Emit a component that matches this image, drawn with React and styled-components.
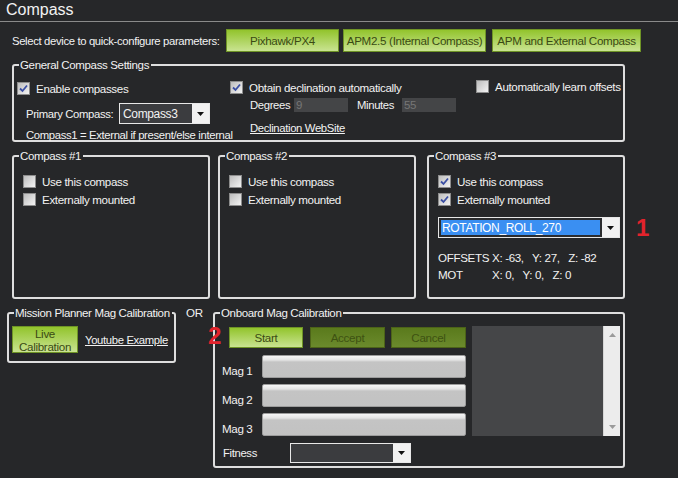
import React from "react";
import styled, { createGlobalStyle } from "styled-components";

const GlobalStyle = createGlobalStyle`
  html, body {
    margin: 0;
    padding: 0;
    background: #262729;
  }
`;

const Page = styled.div`
  width: 678px;
  height: 478px;
  overflow: hidden;
  background: #262729;
  color: #f2f2f2;
  font-family: "Liberation Sans", Arial, sans-serif;
  font-size: 11.3px;
  letter-spacing: -0.35px;
  white-space: nowrap;
`;

const Header = styled.div`
  height: 21px;
  line-height: 20px;
  padding-left: 6px;
  font-size: 16px;
  letter-spacing: 0;
  border-bottom: 1px solid #8a8a8a;
`;

const Body = styled.div`
  padding-left: 12px;
  display: flex;
  flex-direction: column;
`;

const DeviceRow = styled.div`
  margin-top: 7px;
  display: flex;
  align-items: center;
  height: 23px;
`;

const DeviceLabel = styled.span`
  width: 214px;
`;

const GreenButton = styled.button`
  box-sizing: border-box;
  width: ${(p) => p.$w || 74}px;
  height: ${(p) => p.$h || 23}px;
  margin-right: ${(p) => p.$mr || 0}px;
  padding: 0;
  border: 1px solid ${(p) => (p.$off ? "#4c6318" : "#6f9426")};
  background: ${(p) =>
    p.$off
      ? "linear-gradient(#5a7a1c, #6b8a2c)"
      : "linear-gradient(#92c42c, #c9e391)"};
  color: ${(p) => (p.$off ? "#3e5212" : "#3a4a14")};
  font-family: inherit;
  font-size: 11.6px;
  letter-spacing: -0.3px;
  line-height: ${(p) => p.$lh || 14}px;
  white-space: nowrap;
  flex-shrink: 0;
`;

const Group = styled.fieldset`
  box-sizing: border-box;
  margin: 0;
  padding: 0;
  min-width: 0;
  width: ${(p) => p.$w}px;
  height: ${(p) => p.$h}px;
  border: 2px solid #dedede;
  border-radius: 3px;
  position: relative;
`;

const Legend = styled.legend`
  margin-left: 5px;
  padding: 0 2px 0 1px;
  font-size: 11.5px;
  line-height: 14px;
`;

const GeneralGrid = styled.div`
  display: grid;
  grid-template-columns: 213px 246px 1fr;
  padding-left: 3px;
`;

const Col = styled.div`
  display: flex;
  flex-direction: column;
  padding-top: ${(p) => p.$pt || 0}px;
`;

const CheckRow = styled.label`
  display: flex;
  align-items: center;
  gap: 6px;
  height: 14px;
  font-size: 11.6px;
  margin-bottom: ${(p) => p.$mb || 0}px;
`;

const Box = styled.span`
  box-sizing: border-box;
  width: 13px;
  height: 13px;
  border: 1px solid #8d8d8d;
  background: linear-gradient(135deg, #bdbdbd, #f3f3f3);
  display: flex;
  align-items: center;
  justify-content: center;
`;

const CheckBox = ({ checked }) => (
  <Box>
    {checked && (
      <svg width="9" height="9" viewBox="0 0 9 9">
        <path d="M1 4.5 L3.5 7 L8 1.5" fill="none" stroke="#3b4fa3" strokeWidth="1.8" />
      </svg>
    )}
  </Box>
);

const Check = ({ checked, children, mb }) => (
  <CheckRow $mb={mb}>
    <CheckBox checked={checked} />
    <span>{children}</span>
  </CheckRow>
);

const FieldRow = styled.div`
  display: flex;
  align-items: center;
  margin-top: ${(p) => p.$mt || 0}px;
  padding-left: ${(p) => p.$pl || 0}px;
`;

const FieldLabel = styled.span`
  width: ${(p) => p.$w}px;
  padding-left: ${(p) => p.$pl || 0}px;
  box-sizing: border-box;
  flex-shrink: 0;
`;

const Combo = styled.div`
  box-sizing: border-box;
  width: ${(p) => p.$w}px;
  height: ${(p) => p.$h}px;
  border: 1px solid #e8e8e8;
  background: #3b3c3f;
  display: flex;
  align-items: stretch;
`;

const ComboText = styled.span`
  flex: 1;
  padding-left: 3px;
  display: flex;
  align-items: center;
  font-size: 12px;
`;

const ComboArrow = styled.span`
  width: 17px;
  background: #f1f1f1;
  display: flex;
  align-items: center;
  justify-content: center;
`;

const Arrow = () => (
  <svg width="7" height="4" viewBox="0 0 7 4">
    <path d="M0 0 H7 L3.5 4 Z" fill="#111" />
  </svg>
);

const SmallInput = styled.div`
  box-sizing: border-box;
  width: 54px;
  height: 14px;
  background: #444547;
  color: #767676;
  font-size: 11.5px;
  line-height: 14px;
  padding-left: 2px;
`;

const Link = styled.span`
  text-decoration: underline;
  line-height: 14px;
`;

const Note = styled.div`
  margin-top: ${(p) => p.$mt || 0}px;
  padding-left: ${(p) => p.$pl || 0}px;
  line-height: 14px;
`;

const CompassRow = styled.div`
  margin-top: 7px;
  display: flex;
  align-items: flex-start;
`;

const GroupBody = styled.div`
  padding: 11px 0 0 9px;
  display: flex;
  flex-direction: column;
`;

const Marker = styled.span`
  color: #e2232c;
  font-weight: bold;
  font-size: 24px;
  letter-spacing: 0;
  line-height: 24px;
`;

const FloatingMarker = styled(Marker)`
  position: absolute;
  left: -7px;
  top: 4px;
`;

const RotationSelect = styled.div`
  box-sizing: border-box;
  margin-top: 11px;
  width: 182px;
  height: 21px;
  border: 1px solid #e6e6e6;
  background: #f1f1f1;
  display: flex;
`;

const RotationValue = styled.span`
  flex: 1;
  border: 2px solid #2b2c2e;
  background: #3a8ff2;
  color: #fff;
  font-size: 12px;
  display: flex;
  align-items: center;
  padding-left: 1px;
`;

const OffsetGrid = styled.div`
  margin-top: 11px;
  display: grid;
  grid-template-columns: 54px 1fr;
  line-height: 17px;
  font-size: 11.6px;
  white-space: pre;
`;

const BottomRow = styled.div`
  margin-top: 7px;
  margin-left: -5px;
  display: flex;
  align-items: flex-start;
`;

const OrText = styled.span`
  margin: 0 0 0 10px;
  width: 27px;
  line-height: 14px;
  font-size: 11.6px;
`;

const LiveRow = styled.div`
  display: flex;
  align-items: center;
  gap: 7px;
  padding: 6px 0 0 3px;
`;

const OnboardGrid = styled.div`
  display: grid;
  grid-template-columns: 244px 148px;
  column-gap: 6px;
  padding-left: 7px;
`;

const ButtonRow = styled.div`
  display: flex;
  margin: 7px 0 0 7px;
`;

const MagRow = styled.div`
  display: flex;
  align-items: flex-end;
  height: 23px;
  margin-top: ${(p) => p.$mt}px;
`;

const MagLabel = styled.span`
  width: 40px;
  line-height: 14px;
  font-size: 11.6px;
`;

const Progress = styled.div`
  box-sizing: border-box;
  width: 204px;
  height: 23px;
  border: 1px solid #9c9c9c;
  border-radius: 2px;
  background: linear-gradient(#f6f6f6 0, #e4e4e4 4px, #c4c4c4 6px, #c2c2c2 100%);
`;

const LogBox = styled.div`
  margin-top: 6px;
  height: 110px;
  background: #454648;
  display: flex;
  justify-content: flex-end;
`;

const ScrollBar = styled.div`
  width: 17px;
  background: #ececec;
  border-left: 1px solid #d6d6d6;
  display: flex;
  flex-direction: column;
  justify-content: space-between;
  align-items: center;
  padding: 7px 0;
  box-sizing: border-box;
`;

const Tri = ({ up }) => (
  <svg width="7" height="4" viewBox="0 0 7 4">
    <path d={up ? "M0 4 H7 L3.5 0 Z" : "M0 0 H7 L3.5 4 Z"} fill="#9a9a9a" />
  </svg>
);

function App() {
  return (
    <Page>
      <GlobalStyle />
      <Header>Compass</Header>
      <Body>
        <DeviceRow>
          <DeviceLabel>Select device to quick-configure parameters:</DeviceLabel>
          <GreenButton $w={113} $mr={4}>Pixhawk/PX4</GreenButton>
          <GreenButton $w={143} $mr={6}>APM2.5 (Internal Compass)</GreenButton>
          <GreenButton $w={149}>APM and External Compass</GreenButton>
        </DeviceRow>

        <Group $w={613} $h={84} style={{ marginTop: 6 }}>
          <Legend>General Compass Settings</Legend>
          <GeneralGrid>
            <Col $pt={9}>
              <Check checked>Enable compasses</Check>
              <FieldRow $mt={8} $pl={9}>
                <FieldLabel $w={93}>Primary Compass:</FieldLabel>
                <Combo $w={91} $h={21}>
                  <ComboText>Compass3</ComboText>
                  <ComboArrow><Arrow /></ComboArrow>
                </Combo>
              </FieldRow>
              <Note $mt={4} $pl={9}>Compass1 = External if present/else internal</Note>
            </Col>
            <Col $pt={8}>
              <Check checked>Obtain declination automatically</Check>
              <FieldRow $mt={4} $pl={20}>
                <FieldLabel $w={44}>Degrees</FieldLabel>
                <SmallInput>9</SmallInput>
                <FieldLabel $w={54} $pl={9}>Minutes</FieldLabel>
                <SmallInput>55</SmallInput>
              </FieldRow>
              <Note $mt={9} $pl={20}><Link>Declination WebSite</Link></Note>
            </Col>
            <Col $pt={7}>
              <Check>Automatically learn offsets</Check>
            </Col>
          </GeneralGrid>
        </Group>

        <CompassRow>
          <Group $w={198} $h={150}>
            <Legend>Compass #1</Legend>
            <GroupBody>
              <Check mb={4}>Use this compass</Check>
              <Check>Externally mounted</Check>
            </GroupBody>
          </Group>
          <Group $w={198} $h={150} style={{ marginLeft: 8 }}>
            <Legend>Compass #2</Legend>
            <GroupBody>
              <Check mb={4}>Use this compass</Check>
              <Check>Externally mounted</Check>
            </GroupBody>
          </Group>
          <Group $w={198} $h={150} style={{ marginLeft: 11 }}>
            <Legend>Compass #3</Legend>
            <GroupBody>
              <Check checked mb={4}>Use this compass</Check>
              <Check checked>Externally mounted</Check>
              <RotationSelect>
                <RotationValue>ROTATION_ROLL_270</RotationValue>
                <ComboArrow><Arrow /></ComboArrow>
              </RotationSelect>
              <OffsetGrid>
                <span>OFFSETS</span>
                <span>X: -63,   Y: 27,   Z: -82</span>
                <span>MOT</span>
                <span>X: 0,   Y: 0,   Z: 0</span>
              </OffsetGrid>
            </GroupBody>
          </Group>
          <Marker style={{ marginLeft: 11, marginTop: 67 }}>1</Marker>
        </CompassRow>

        <BottomRow>
          <Group $w={169} $h={57}>
            <Legend>Mission Planner Mag Calibration</Legend>
            <LiveRow>
              <GreenButton $w={66} $h={27} $lh={13}>Live<br />Calibration</GreenButton>
              <Link>Youtube Example</Link>
            </LiveRow>
          </Group>
          <OrText>OR</OrText>
          <Group $w={412} $h={162}>
            <Legend>Onboard Mag Calibration</Legend>
            <FloatingMarker>2</FloatingMarker>
            <OnboardGrid>
              <Col>
                <ButtonRow>
                  <GreenButton $w={74} $h={21} $mr={7}>Start</GreenButton>
                  <GreenButton $w={75} $h={21} $mr={6} $off>Accept</GreenButton>
                  <GreenButton $w={75} $h={21} $off>Cancel</GreenButton>
                </ButtonRow>
                <MagRow $mt={7}><MagLabel>Mag 1</MagLabel><Progress /></MagRow>
                <MagRow $mt={6}><MagLabel>Mag 2</MagLabel><Progress /></MagRow>
                <MagRow $mt={6}><MagLabel>Mag 3</MagLabel><Progress /></MagRow>
                <FieldRow $mt={7} $pl={1}>
                  <FieldLabel $w={67}>Fitness</FieldLabel>
                  <Combo $w={121} $h={20}>
                    <ComboText />
                    <ComboArrow><Arrow /></ComboArrow>
                  </Combo>
                </FieldRow>
              </Col>
              <LogBox>
                <ScrollBar>
                  <Tri up />
                  <Tri />
                </ScrollBar>
              </LogBox>
            </OnboardGrid>
          </Group>
        </BottomRow>
      </Body>
    </Page>
  );
}

export default App;
